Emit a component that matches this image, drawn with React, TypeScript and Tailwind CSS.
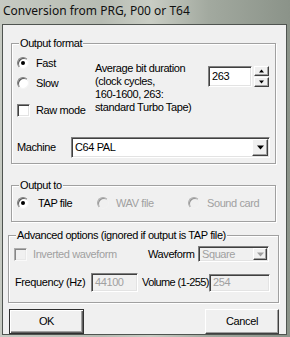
import React from 'react';

// classic sunken / raised edges
const sunken =
  'border border-t-[#808080] border-l-[#808080] border-b-[#ffffff] border-r-[#ffffff] shadow-[inset_1px_1px_0_#404040,inset_-1px_-1px_0_#e3e3e3]';
const raised =
  'border border-t-[#ffffff] border-l-[#ffffff] border-b-[#404040] border-r-[#404040] shadow-[inset_-1px_-1px_0_#a0a0a0]';

const Radio = ({ checked, disabled }: { checked?: boolean; disabled?: boolean }) => (
  <span
    className={`flex h-[12px] w-[12px] shrink-0 items-center justify-center rounded-full border border-t-[#808080] border-l-[#808080] border-b-[#f4f4f4] border-r-[#f4f4f4] shadow-[inset_1px_1px_0_#5a5a5a] ${
      disabled ? 'bg-[#f0f0f0] opacity-60' : 'bg-white'
    }`}
  >
    {checked && <span className="h-[4px] w-[4px] rounded-full bg-black" />}
  </span>
);

const Check = ({ disabled }: { disabled?: boolean }) => (
  <span className={`block h-[13px] w-[13px] shrink-0 ${sunken} ${disabled ? 'bg-[#f0f0f0] opacity-60' : 'bg-white'}`} />
);

const Arrow = ({ up, size = 7, color = '#000' }: { up?: boolean; size?: number; color?: string }) => (
  <svg width={size} height={Math.ceil(size / 2) + 1} viewBox="0 0 7 4">
    <path d={up ? 'M0 4 L3.5 0 L7 4 Z' : 'M0 0 L7 0 L3.5 4 Z'} fill={color} />
  </svg>
);

const GroupBox = ({
  label,
  className,
  children,
}: {
  label: string;
  className: string;
  children: React.ReactNode;
}) => (
  <div
    className={`relative shrink-0 border border-[#a0a0a0] shadow-[inset_1px_1px_0_#ffffff,1px_1px_0_#ffffff] ${className}`}
  >
    <span className="absolute -top-[8px] left-[7px] whitespace-nowrap bg-[#f0f0f0] px-[1px] leading-[14px]">{label}</span>
    {children}
  </div>
);

export default function App() {
  return (
    <div className="flex h-[337px] w-[290px] flex-col overflow-hidden whitespace-nowrap bg-[linear-gradient(90deg,#c6cac2_0%,#b7bcb3_35%,#c9cdc4_52%,#a2a99f_72%,#8b9389_100%)] font-['Liberation_Sans',Arial,sans-serif] text-[11px] tracking-[-0.4px] text-black">
      {/* title bar */}
      <div className="flex h-[24px] shrink-0 items-center pl-[3px] pb-[2px] font-['Noto_Sans',sans-serif] text-[12px] tracking-normal text-[#101010]">
        Conversion from PRG, P00 or T64
      </div>

      {/* client area */}
      <div className="ml-[2px] flex h-[311px] w-[285px] shrink-0 flex-col border border-[#4f5450] bg-[#f0f0f0]">
        {/* Output format */}
        <GroupBox label="Output format" className="ml-[8px] mt-[18px] h-[121px] w-[265px]">
          <div className="flex items-start">
            <div className="ml-[5px] mt-[9px] w-[78px]">
              <div className="flex h-[20px] items-center gap-[7px]">
                <Radio checked />
                <span>Fast</span>
              </div>
              <div className="flex h-[20px] items-center gap-[7px]">
                <Radio />
                <span>Slow</span>
              </div>
              <div className="mt-[7px] flex h-[20px] items-center gap-[6px]">
                <Check />
                <span>Raw mode</span>
              </div>
            </div>
            <p className="mt-[18px] w-[113px] leading-[13px]">
              Average bit duration
              <br />
              (clock cycles,
              <br />
              160-1600, 263:
              <br />
              standard Turbo Tape)
            </p>
            <div className="mt-[22px] flex gap-[2px]">
              <div className={`flex h-[21px] w-[44px] items-center bg-white pl-[3px] ${sunken}`}>263</div>
              <div className="flex flex-col gap-[1px]">
                <div className={`flex h-[10px] w-[15px] items-center justify-center bg-[#f0f0f0] ${raised}`}>
                  <Arrow up size={5} />
                </div>
                <div className={`flex h-[10px] w-[15px] items-center justify-center bg-[#f0f0f0] ${raised}`}>
                  <Arrow size={5} />
                </div>
              </div>
            </div>
          </div>
          <div className="mt-[17px] flex items-center">
            <span className="ml-[5px] w-[54px]">Machine</span>
            <div className={`flex h-[21px] w-[199px] items-center justify-between bg-white pl-[3px] pr-[1px] ${sunken}`}>
              <span>C64 PAL</span>
              <div className={`flex h-[17px] w-[16px] items-center justify-center bg-[#f0f0f0] ${raised}`}>
                <Arrow />
              </div>
            </div>
          </div>
        </GroupBox>

        {/* Output to */}
        <GroupBox label="Output to" className="ml-[8px] mt-[21px] h-[37px] w-[265px]">
          <div className="mt-[10px] flex h-[14px] items-center">
            <div className="ml-[5px] flex w-[80px] items-center gap-[9px]">
              <Radio checked />
              <span>TAP file</span>
            </div>
            <div className="flex w-[91px] items-center gap-[7px] text-[#a0a0a0]">
              <Radio disabled />
              <span>WAV file</span>
            </div>
            <div className="flex items-center gap-[7px] text-[#a0a0a0]">
              <Radio disabled />
              <span>Sound card</span>
            </div>
          </div>
        </GroupBox>

        {/* Advanced options */}
        <GroupBox
          label="Advanced options (ignored if output is TAP file)"
          className="ml-[5px] mt-[13px] h-[68px] w-[271px]"
        >
          <div className="mt-[10px] flex h-[16px] items-center">
            <div className="ml-[5px] flex w-[134px] items-center gap-[6px] text-[#a0a0a0]">
              <Check disabled />
              <span>Inverted waveform</span>
            </div>
            <span className="w-[50px]">Waveform</span>
            <div className={`flex h-[16px] w-[71px] items-center justify-between bg-[#f0f0f0] pl-[3px] pr-[1px] text-[#a0a0a0] ${sunken}`}>
              <span>Square</span>
              <div className={`flex h-[12px] w-[14px] items-center justify-center bg-[#f0f0f0] ${raised}`}>
                <Arrow color="#a0a0a0" />
              </div>
            </div>
          </div>
          <div className="mt-[11px] flex h-[19px] items-center">
            <span className="ml-[6px] w-[76px]">Frequency (Hz)</span>
            <div className={`flex h-[19px] w-[47px] shrink-0 items-center bg-[#f0f0f0] pl-[3px] text-[#a0a0a0] ${sunken}`}>44100</div>
            <span className="ml-[4px] tracking-[-0.6px]">Volume (1-255)</span>
            <div className={`ml-auto mr-[8px] flex h-[18px] w-[61px] shrink-0 items-center bg-[#f0f0f0] pl-[3px] text-[#a0a0a0] ${sunken}`}>254</div>
          </div>
        </GroupBox>

        {/* buttons */}
        <div className="mt-[6px] flex">
          <button className="ml-[6px] h-[25px] w-[75px] border border-[#303030] bg-[#f0f0f0] shadow-[inset_1px_1px_0_#ffffff,inset_-1px_-1px_0_#606060,inset_-2px_-2px_0_#a0a0a0]">
            OK
          </button>
          <button className="ml-auto mr-[7px] h-[25px] w-[74px] border border-t-[#ffffff] border-l-[#ffffff] border-b-[#404040] border-r-[#404040] bg-[#f0f0f0] shadow-[inset_-1px_-1px_0_#a0a0a0]">
            Cancel
          </button>
        </div>
      </div>
    </div>
  );
}
